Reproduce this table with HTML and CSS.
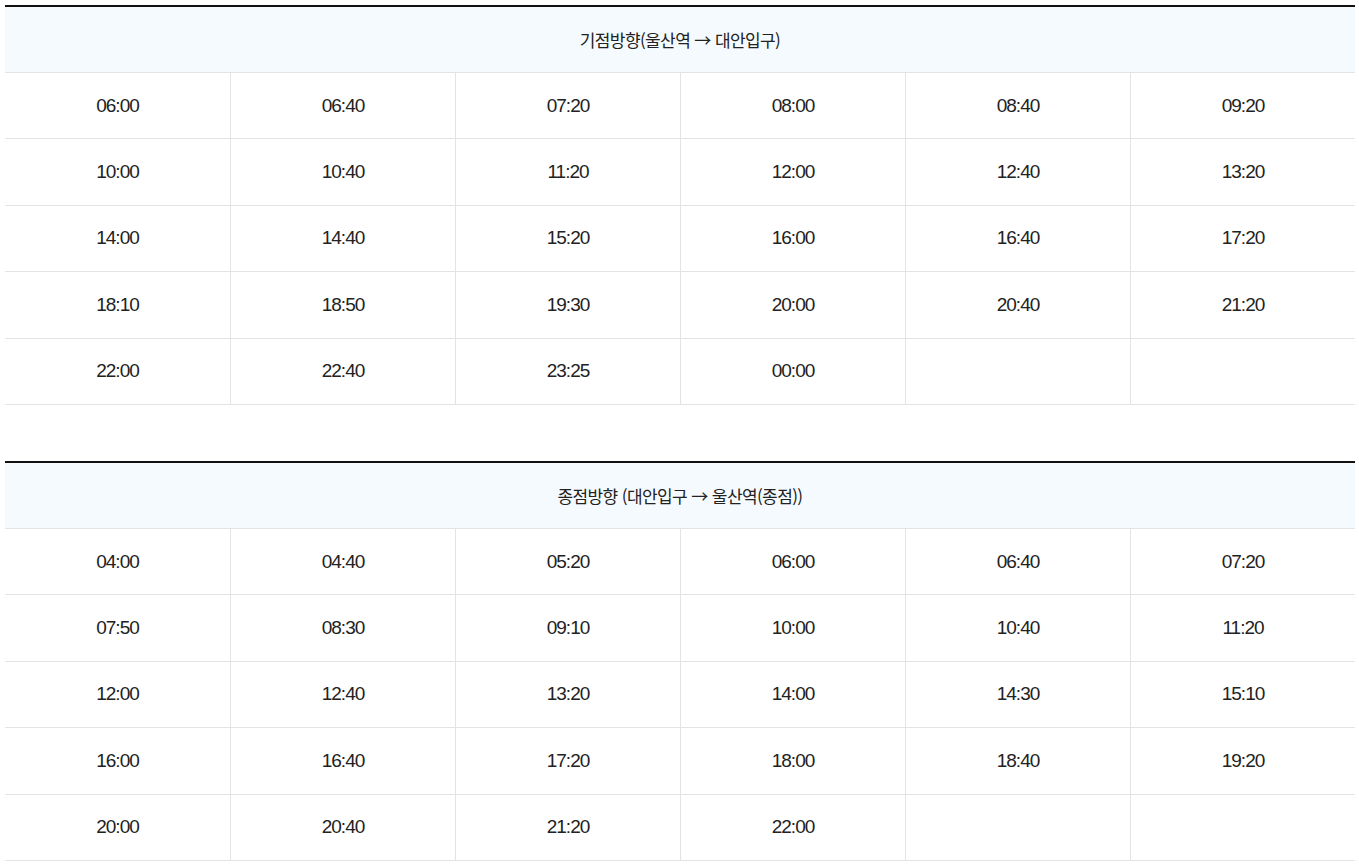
FILE: index.html
```html
<!DOCTYPE html>
<html lang="ko">
<head>
<meta charset="utf-8">
<title>시간표</title>
<link rel="stylesheet" href="styles.css">
</head>
<body>
<div class="page">
  <section class="timetable">
    <div class="head">기점방향(울산역 → 대안입구)</div>
    <div class="grid">
      <div class="cell">06:00</div><div class="cell">06:40</div><div class="cell">07:20</div><div class="cell">08:00</div><div class="cell">08:40</div><div class="cell">09:20</div>
      <div class="cell">10:00</div><div class="cell">10:40</div><div class="cell">11:20</div><div class="cell">12:00</div><div class="cell">12:40</div><div class="cell">13:20</div>
      <div class="cell">14:00</div><div class="cell">14:40</div><div class="cell">15:20</div><div class="cell">16:00</div><div class="cell">16:40</div><div class="cell">17:20</div>
      <div class="cell">18:10</div><div class="cell">18:50</div><div class="cell">19:30</div><div class="cell">20:00</div><div class="cell">20:40</div><div class="cell">21:20</div>
      <div class="cell">22:00</div><div class="cell">22:40</div><div class="cell">23:25</div><div class="cell">00:00</div><div class="cell"></div><div class="cell"></div>
    </div>
  </section>
  <section class="timetable">
    <div class="head">종점방향 (대안입구 → 울산역(종점))</div>
    <div class="grid">
      <div class="cell">04:00</div><div class="cell">04:40</div><div class="cell">05:20</div><div class="cell">06:00</div><div class="cell">06:40</div><div class="cell">07:20</div>
      <div class="cell">07:50</div><div class="cell">08:30</div><div class="cell">09:10</div><div class="cell">10:00</div><div class="cell">10:40</div><div class="cell">11:20</div>
      <div class="cell">12:00</div><div class="cell">12:40</div><div class="cell">13:20</div><div class="cell">14:00</div><div class="cell">14:30</div><div class="cell">15:10</div>
      <div class="cell">16:00</div><div class="cell">16:40</div><div class="cell">17:20</div><div class="cell">18:00</div><div class="cell">18:40</div><div class="cell">19:20</div>
      <div class="cell">20:00</div><div class="cell">20:40</div><div class="cell">21:20</div><div class="cell">22:00</div><div class="cell"></div><div class="cell"></div>
    </div>
  </section>
</div>
</body>
</html>
```

FILE: styles.css
```css
html, body {
  margin: 0;
  padding: 0;
  background: #ffffff;
}

body {
  font-family: "Liberation Sans", Arial, "Noto Sans CJK KR", sans-serif;
  color: #222222;
}

.page {
  padding: 5px 4px 0 5px;
  display: flex;
  flex-direction: column;
  gap: 56px;
}

.timetable {
  border-top: 2px solid #111111;
}

.head {
  height: 65px;
  display: flex;
  align-items: center;
  justify-content: center;
  background: #f5faff;
  border-bottom: 1px solid #e3e3e3;
  font-family: "Noto Sans CJK KR", sans-serif;
  font-size: 17px;
  letter-spacing: -0.6px;
  color: #222222;
}

.grid {
  display: grid;
  grid-template-columns: repeat(6, 1fr);
}

.cell {
  height: 65.4px;
  display: flex;
  align-items: center;
  justify-content: center;
  border-bottom: 1px solid #e3e3e3;
  border-left: 1px solid #e3e3e3;
  font-size: 19px;
  letter-spacing: -1px;
}

.cell:nth-child(6n+1) {
  border-left: none;
}
```
